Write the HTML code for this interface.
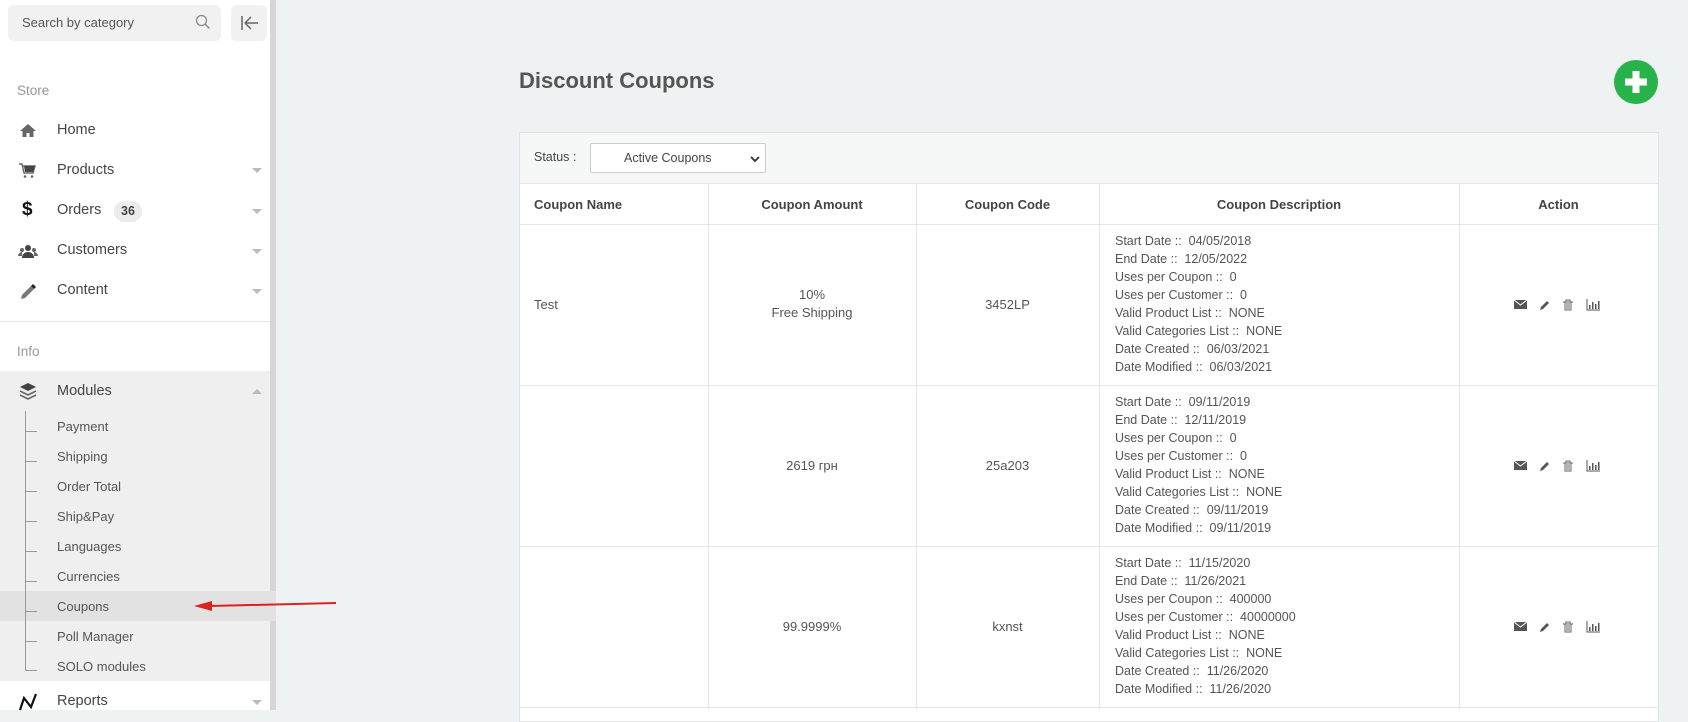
<!DOCTYPE html>
<html><head><meta charset="utf-8">
<style>
*{box-sizing:border-box;margin:0;padding:0}
body{width:1688px;height:710px;overflow:hidden;background:#eff2f2;font-family:"Liberation Sans",Arial,sans-serif;color:#555;position:relative}
.a{position:absolute}
#side{left:0;top:0;width:270px;height:710px;background:#fff}
.sb{left:270px;top:0;width:6px;height:710px;background:#d6d6d6}
.it{position:absolute;left:57px;font-size:14.5px;color:#444;font-weight:500}
.ic{position:absolute;left:18px;width:20px;height:20px}
.car{position:absolute;left:252px;width:0;height:0;border-left:5px solid transparent;border-right:5px solid transparent;border-top:5px solid #bbb}
.sub{position:absolute;left:57px;font-size:13px;color:#555}
.tk{position:absolute;left:26px;width:11px;height:1px;background:#999}
.th{position:absolute;top:184px;height:41px;line-height:41px;font-size:13px;font-weight:bold;color:#444;text-align:center}
.vl{position:absolute;top:184px;width:1px;height:526px;background:#e6e6e6}
.hl{position:absolute;left:520px;width:1138px;height:1px;background:#e6e6e6}
.c{position:absolute;font-size:13px;color:#555;text-align:center;line-height:18px}
.d{position:absolute;left:1115px;font-size:12.5px;color:#555;line-height:18px}
</style></head><body>
<div id="side" class="a"></div>
<div class="a sb"></div>
<!-- search -->
<div class="a" style="left:8px;top:5px;width:213px;height:36px;background:#f1f1f1;border-radius:5px"></div>
<div class="a" style="left:22px;top:15px;font-size:13px;color:#555">Search by category</div>
<svg class="a" style="left:195px;top:14px" width="16" height="16" viewBox="0 0 16 16"><circle cx="6.5" cy="6.5" r="5" fill="none" stroke="#888" stroke-width="1.3"/><path d="M10 10l4.5 4.5" stroke="#888" stroke-width="1.4"/></svg>
<div class="a" style="left:231px;top:5px;width:36px;height:36px;background:#f1f1f1;border-radius:5px"></div>
<svg class="a" style="left:240px;top:14px" width="20" height="18" viewBox="0 0 20 18"><path d="M2 2v14M5 9h13M5 9l6-6M5 9l6 6" stroke="#666" stroke-width="1.5" fill="none"/></svg>

<div class="a" style="left:17px;top:83px;font-size:13.5px;color:#999">Store</div>
<svg class="ic" style="top:121px" viewBox="0 0 20 20"><path d="M10 3L2 10h2.5v6h4v-4h3v4h4v-6H18z" fill="#666"/></svg>
<div class="it" style="top:122px">Home</div>
<svg class="ic" style="top:161px" viewBox="0 0 20 20"><path d="M1 3h3l2 9h9l2-7H5" fill="none" stroke="#666" stroke-width="1.4"/><path d="M6 5h11l-2 6H7z" fill="#444"/><circle cx="7" cy="15.5" r="1.3" fill="#666"/><circle cx="14" cy="15.5" r="1.3" fill="#666"/></svg>
<div class="it" style="top:162px">Products</div><div class="car" style="top:168px"></div>
<div class="a" style="left:22px;top:199px;font-size:19px;font-weight:bold;color:#111">$</div>
<div class="it" style="top:202px">Orders</div>
<div class="a" style="left:114px;top:201px;width:28px;height:21px;border-radius:10px;background:#ececec;font-size:12.5px;font-weight:bold;color:#444;text-align:center;line-height:21px">36</div>
<div class="car" style="top:209px"></div>
<svg class="ic" style="top:242px" viewBox="0 0 20 20"><circle cx="10" cy="6" r="3" fill="#444"/><path d="M4 16c0-4 3-6 6-6s6 2 6 6z" fill="#444"/><circle cx="4" cy="8" r="2" fill="#666"/><circle cx="16" cy="8" r="2" fill="#666"/><path d="M0 14c0-2 2-4 4-4v4zM20 14c0-2-2-4-4-4v4z" fill="#666"/></svg>
<div class="it" style="top:242px">Customers</div><div class="car" style="top:249px"></div>
<svg class="ic" style="top:282px" viewBox="0 0 20 20"><path d="M3 17l1-4 9-9 3 3-9 9z" fill="#777"/><path d="M13 4l2-2 3 3-2 2z" fill="#222"/></svg>
<div class="it" style="top:282px">Content</div><div class="car" style="top:289px"></div>
<div class="a" style="left:0;top:321px;width:270px;height:1px;background:#e4e4e4"></div>
<div class="a" style="left:17px;top:344px;font-size:13.5px;color:#999">Info</div>
<!-- modules block -->
<div class="a" style="left:0;top:371px;width:270px;height:310px;background:#efefef"></div>
<div class="a" style="left:0;top:591px;width:276px;height:30px;background:#e2e2e2"></div>
<svg class="ic" style="top:381px" viewBox="0 0 20 20"><path d="M10 2l8 4-8 4-8-4z" fill="#444"/><path d="M2 10l8 4 8-4M2 14l8 4 8-4" fill="none" stroke="#666" stroke-width="1.6"/></svg>
<div class="it" style="top:383px">Modules</div>
<div class="a" style="left:252px;top:389px;border-left:5px solid transparent;border-right:5px solid transparent;border-bottom:5px solid #bbb"></div>
<div class="a" style="left:25px;top:411px;width:1px;height:260px;background:#999"></div>
<div class="sub" style="top:419px">Payment</div><div class="tk" style="top:431px"></div>
<div class="sub" style="top:449px">Shipping</div><div class="tk" style="top:461px"></div>
<div class="sub" style="top:479px">Order Total</div><div class="tk" style="top:491px"></div>
<div class="sub" style="top:509px">Ship&amp;Pay</div><div class="tk" style="top:521px"></div>
<div class="sub" style="top:539px">Languages</div><div class="tk" style="top:551px"></div>
<div class="sub" style="top:569px">Currencies</div><div class="tk" style="top:581px"></div>
<div class="sub" style="top:599px">Coupons</div><div class="tk" style="top:611px"></div>
<div class="sub" style="top:629px">Poll Manager</div><div class="tk" style="top:641px"></div>
<div class="sub" style="top:659px">SOLO modules</div><div class="tk" style="top:670px"></div>
<svg class="ic" style="top:692px" viewBox="0 0 20 20"><path d="M2 18l4-12 7 9 5-13" fill="none" stroke="#111" stroke-width="2.2"/></svg>
<div class="it" style="top:693px">Reports</div><div class="car" style="top:700px"></div>
<!-- arrow -->
<svg class="a" style="left:190px;top:596px" width="150" height="18" viewBox="0 0 150 18"><path d="M146 7L20 10" stroke="#d22" stroke-width="2"/><path d="M4 10l18-5v10z" fill="#d22"/></svg>

<!-- main -->
<div class="a" style="left:519px;top:68px;font-size:22px;font-weight:bold;color:#555">Discount Coupons</div>
<svg class="a" style="left:1614px;top:60px" width="44" height="44" viewBox="0 0 44 44"><circle cx="22" cy="22" r="22" fill="#27b34a"/><path d="M22 11v22M11 22h22" stroke="#fff" stroke-width="7"/></svg>
<div class="a" style="left:519px;top:132px;width:1140px;height:590px;background:#fff;border:1px solid #e3e3e3"></div>
<div class="a" style="left:520px;top:133px;width:1138px;height:51px;background:#f6f7f7;border-bottom:1px solid #e6e6e6"></div>
<div class="a" style="left:534px;top:150px;font-size:12.5px;color:#444">Status :</div>
<div class="a" style="left:590px;top:143px;width:176px;height:30px;background:#fff;border:1px solid #ccc;border-radius:2px"></div>
<div class="a" style="left:624px;top:151px;font-size:12.5px;color:#444">Active Coupons</div>
<svg class="a" style="left:750px;top:155px" width="10" height="8" viewBox="0 0 10 8"><path d="M1 2l4 4 4-4" fill="none" stroke="#333" stroke-width="1.8"/></svg>

<div class="hl" style="top:224px"></div>
<div class="hl" style="top:385px"></div>
<div class="hl" style="top:546px"></div>
<div class="hl" style="top:707px"></div>
<div class="vl" style="left:708px"></div>
<div class="vl" style="left:916px"></div>
<div class="vl" style="left:1099px"></div>
<div class="vl" style="left:1459px"></div>
<div class="th" style="left:534px;text-align:left">Coupon Name</div>
<div class="th" style="left:708px;width:208px">Coupon Amount</div>
<div class="th" style="left:916px;width:183px">Coupon Code</div>
<div class="th" style="left:1099px;width:360px">Coupon Description</div>
<div class="th" style="left:1459px;width:199px">Action</div>

<div class="c" style="left:534px;top:296px;text-align:left">Test</div>
<div class="c" style="left:708px;width:208px;top:286px">10%<br>Free Shipping</div>
<div class="c" style="left:916px;width:183px;top:296px">3452LP</div>
<div class="d" style="top:232px">Start Date ::&nbsp; 04/05/2018<br>End Date ::&nbsp; 12/05/2022<br>Uses per Coupon ::&nbsp; 0<br>Uses per Customer ::&nbsp; 0<br>Valid Product List ::&nbsp; NONE<br>Valid Categories List ::&nbsp; NONE<br>Date Created ::&nbsp; 06/03/2021<br>Date Modified ::&nbsp; 06/03/2021</div>

<div class="c" style="left:708px;width:208px;top:457px">2619 грн</div>
<div class="c" style="left:916px;width:183px;top:457px">25a203</div>
<div class="d" style="top:393px">Start Date ::&nbsp; 09/11/2019<br>End Date ::&nbsp; 12/11/2019<br>Uses per Coupon ::&nbsp; 0<br>Uses per Customer ::&nbsp; 0<br>Valid Product List ::&nbsp; NONE<br>Valid Categories List ::&nbsp; NONE<br>Date Created ::&nbsp; 09/11/2019<br>Date Modified ::&nbsp; 09/11/2019</div>

<div class="c" style="left:708px;width:208px;top:618px">99.9999%</div>
<div class="c" style="left:916px;width:183px;top:618px">kxnst</div>
<div class="d" style="top:554px">Start Date ::&nbsp; 11/15/2020<br>End Date ::&nbsp; 11/26/2021<br>Uses per Coupon ::&nbsp; 400000<br>Uses per Customer ::&nbsp; 40000000<br>Valid Product List ::&nbsp; NONE<br>Valid Categories List ::&nbsp; NONE<br>Date Created ::&nbsp; 11/26/2020<br>Date Modified ::&nbsp; 11/26/2020</div>

<!-- action icons -->
<svg width="0" height="0" style="position:absolute"><defs>
<g id="acts">
<path d="M0 1h13v9H0z" fill="#555"/><path d="M0 1l6.5 5L13 1" fill="none" stroke="#fff" stroke-width="1"/>
<path d="M26 11l1-3 6-6 2 2-6 6z" fill="#555"/>
<path d="M49 3h10M51 3v8h6V3M53 4v6M55 4v6M52 3V1h4v2" fill="none" stroke="#666" stroke-width="1"/>
<path d="M73 0v11h13" fill="none" stroke="#555" stroke-width="1"/><path d="M75 6h1.5v4H75zM78 3h1.5v7H78zM81 5h1.5v5H81zM84 2h1.5v8H84z" fill="#555"/>
</g></defs></svg>
<svg class="a" style="left:1514px;top:299px" width="90" height="13"><use href="#acts"/></svg>
<svg class="a" style="left:1514px;top:460px" width="90" height="13"><use href="#acts"/></svg>
<svg class="a" style="left:1514px;top:621px" width="90" height="13"><use href="#acts"/></svg>
</body></html>
